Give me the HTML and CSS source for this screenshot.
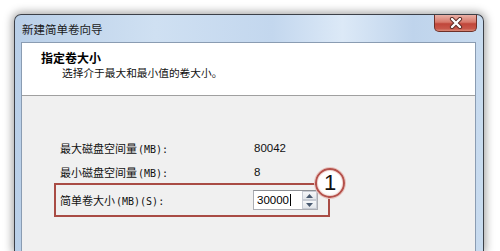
FILE: index.html
```html
<!DOCTYPE html>
<html>
<head>
<meta charset="utf-8">
<link rel="stylesheet" href="styles.css">
</head>
<body>
<div class="window">
  <div class="titlebar">
    <span class="title">新建简单卷向导</span>
    <div class="close">
      <svg width="16" height="12" viewBox="0 0 16 12">
        <path d="M4 2 L12 10 M12 2 L4 10" stroke="#5a2a24" stroke-width="4.2" stroke-linecap="round"/>
        <path d="M4 2 L12 10 M12 2 L4 10" stroke="#ffffff" stroke-width="2.4" stroke-linecap="round"/>
      </svg>
    </div>
  </div>
  <div class="panel">
    <div class="header">
      <div class="h-title">指定卷大小</div>
      <div class="h-sub">选择介于最大和最小值的卷大小。</div>
    </div>
    <div class="body">
      <div class="row"><span class="label">最大磁盘空间量<span class="ascii">(MB):</span></span><span class="value">80042</span></div>
      <div class="row r2"><span class="label">最小磁盘空间量<span class="ascii">(MB):</span></span><span class="value">8</span></div>
      <div class="hl">
        <span class="label lab3">简单卷大小<span class="ascii">(MB)(S):</span></span>
        <div class="spin">
          <span class="spin-text">30000<span class="caret"></span></span>
          <div class="spin-btns">
            <div class="sb"><svg width="7" height="4" viewBox="0 0 7 4"><path d="M0 4 L3.5 0 L7 4 Z" fill="#4a5a70"/></svg></div>
            <div class="sb"><svg width="7" height="4" viewBox="0 0 7 4"><path d="M0 0 L3.5 4 L7 0 Z" fill="#4a5a70"/></svg></div>
          </div>
        </div>
        <div class="badge">1</div>
      </div>
    </div>
  </div>
</div>
</body>
</html>
```
FILE: styles.css
```css
html, body {
  margin: 0;
  padding: 0;
}
body {
  width: 500px;
  height: 251px;
  overflow: hidden;
  background: #ffffff;
  font-family: "Noto Sans CJK SC", "Noto Sans", sans-serif;
  color: #000;
}
.window {
  margin: 14px 0 0 14px;
  width: 470px;
  height: 237px;
  border: 1px solid #3c4048;
  border-bottom: none;
  border-radius: 7px 7px 0 0;
  box-shadow: 0 0 9px 2px rgba(0,0,0,0.35);
  background: linear-gradient(90deg, #b9cfe8 0%, #cfe0f2 30%, #c3d7ee 55%, #dce9f7 70%, #bfd4ec 85%, #c8dbef 100%);
  box-sizing: border-box;
  padding: 0 7px 0 6px;
  overflow: hidden;
}
.titlebar {
  height: 27px;
  display: flex;
  align-items: flex-start;
  justify-content: space-between;
}
.title {
  font-size: 11.5px;
  line-height: 12px;
  margin-top: 8px;
  margin-left: 1px;
  color: #1a1a1a;
}
.close {
  width: 43px;
  height: 17px;
  margin-right: -1px;
  box-sizing: border-box;
  border: 1px solid #6e3028;
  border-top: none;
  border-radius: 0 0 5px 5px;
  background: linear-gradient(180deg, #e9b0a6 0%, #d7786a 45%, #c0463a 55%, #c8574a 85%, #d98a78 100%);
  display: flex;
  align-items: center;
  justify-content: center;
}
.panel {
  border: 1px solid #8a9cb2;
  border-bottom: none;
  background: #f0f0f0;
  height: 210px;
}
.header {
  background: #ffffff;
  height: 52px;
  border-bottom: 1px solid #a0a0a0;
}
.h-title {
  font-size: 12px;
  font-weight: bold;
  line-height: 14px;
  padding: 8px 0 0 19px;
}
.h-sub {
  font-size: 10.7px;
  line-height: 13px;
  padding: 1px 0 0 40px;
  color: #111;
}
.body {
  padding: 40px 0 0 32px;
}
.row {
  display: flex;
  height: 24px;
  align-items: center;
  padding-left: 6px;
  font-size: 11px;
}
.row.r2 {
  height: 23px;
}
.label {
  width: 193px;
  flex: none;
  font-size: 11px;
  color: #111;
}
.ascii {
  font-family: "DejaVu Sans Mono", monospace;
  font-size: 10px;
  margin-left: 1px;
}
.value {
  font-family: "Liberation Sans", Arial, sans-serif;
  font-size: 11.5px;
  color: #111;
  margin-left: 1px;
}
.hl {
  position: relative;
  width: 276px;
  height: 34px;
  box-sizing: border-box;
  border: 2px solid #a94c45;
  padding: 4px 10px 4px 4px;
  display: flex;
  align-items: center;
}
.spin {
  width: 65px;
  height: 20px;
  box-sizing: border-box;
  border: 1px solid #abadb3;
  border-top-color: #8e9095;
  background: #ffffff;
  display: flex;
  align-items: center;
  justify-content: space-between;
}
.spin-text {
  font-family: "Liberation Sans", Arial, sans-serif;
  font-size: 11.5px;
  padding-left: 3px;
  display: flex;
  align-items: center;
}
.caret {
  display: inline-block;
  width: 1px;
  height: 12px;
  background: #000;
  margin-left: 1px;
}
.spin-btns {
  width: 15px;
  height: 18px;
  display: flex;
  flex-direction: column;
}
.sb {
  flex: 1;
  border: 1px solid #c8ccd4;
  background: linear-gradient(180deg, #f6f7f9, #e3e6ea);
  display: flex;
  align-items: center;
  justify-content: center;
}
.badge {
  position: absolute;
  right: -17px;
  top: -17px;
  width: 26px;
  height: 26px;
  border-radius: 50%;
  border: 2px solid #b5514b;
  box-shadow: 0 0 0 1px #e9c4bf, inset 0 0 0 1px #f3dcd8;
  background: radial-gradient(circle at 50% 40%, #ffffff 55%, #f2eceb 100%);
  font-family: "Liberation Sans", Arial, sans-serif;
  font-size: 22px;
  line-height: 26px;
  text-align: center;
  color: #111;
}
```
